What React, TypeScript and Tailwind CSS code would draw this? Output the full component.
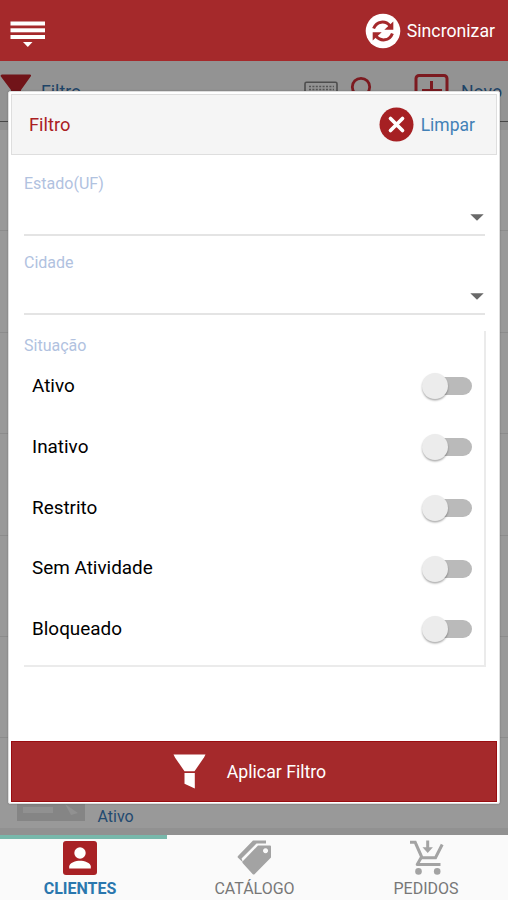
import React from "react";

const statuses = ["Ativo", "Inativo", "Restrito", "Sem Atividade", "Bloqueado"];

function MenuIcon() {
  return (
    <svg width="36" height="28" viewBox="0 0 36 28" fill="#fff">
      <rect x="0.5" y="1.5" width="34.5" height="4" />
      <rect x="0.5" y="8.3" width="34.5" height="4" />
      <rect x="0.5" y="15" width="34.5" height="4" />
      <path d="M13 22h9.5l-4.7 5z" />
    </svg>
  );
}

function SyncIcon() {
  return (
    <svg width="36" height="36" viewBox="0 0 36 36">
      <circle cx="18" cy="18" r="17.3" fill="#fff" />
      <g stroke="#a5292b" strokeWidth="3" fill="none">
        <path d="M8.6 15.6C11.5 7.8 20.5 7.2 25 13" />
        <path d="M27.4 20.4C24.5 28.2 15.5 28.8 11 23" />
      </g>
      <path d="M28.3 8.6v8.2h-9z" fill="#a5292b" />
      <path d="M7.7 27.4V19.2h9z" fill="#a5292b" />
    </svg>
  );
}

function Header() {
  return (
    <header className="flex h-[61px] shrink-0 items-center justify-between bg-[#a5292b] pl-[9.5px] pr-[13px]">
      <div className="pt-[7px]">
        <MenuIcon />
      </div>
      <div className="flex items-center gap-[6px] text-[17.7px] text-white">
        <SyncIcon />
        <span className="pt-[1px]">Sincronizar</span>
      </div>
    </header>
  );
}

function Toolbar() {
  return (
    <div className="flex h-[61px] shrink-0 items-start border-b border-[#474747] bg-[#939393] text-[17.7px] text-[#1e4467]">
      <svg width="32" height="34" viewBox="0 0 32 34" className="mt-[13px] shrink-0">
        <path d="M0.5 2Q0.5 0.5 2 0.5H30Q31.5 0.5 31 2L21 16V33L11 28V16Z" fill="#711419" />
      </svg>
      <span className="ml-[9px] mt-[18px]">Filtro</span>
      <svg width="34" height="24" viewBox="0 0 34 24" fill="none" className="ml-auto mt-[20px] shrink-0">
        <rect x="1" y="1.2" width="32" height="21" rx="1.5" stroke="#4d4d4d" strokeWidth="1.6" />
        <path d="M5 5.5H30M5 8.5H30" stroke="#555" strokeWidth="1.6" strokeDasharray="2 1.4" />
      </svg>
      <svg width="24" height="32" viewBox="0 0 24 32" fill="none" stroke="#7c1a20" strokeWidth="2.8" className="ml-[11px] mt-[15px] shrink-0">
        <circle cx="12" cy="11" r="8.7" />
        <path d="M12 20v10" />
      </svg>
      <svg width="36" height="36" viewBox="0 0 36 36" fill="none" stroke="#7c1a20" strokeWidth="3" className="ml-[41px] mt-[12px] shrink-0">
        <rect x="2" y="2.5" width="31" height="31" rx="3" />
        <path d="M17.5 8V28M8 17.5H28" />
      </svg>
      <span className="ml-[11px] mr-[6px] mt-[18px]">Novo</span>
    </div>
  );
}

function ClientList() {
  return (
    <div className="flex grow flex-col overflow-hidden bg-[#999999]">
      <div className="h-[8px] shrink-0 bg-[#919191]" />
      {[0, 1, 2, 3, 4, 5].map((row) => (
        <div key={row} className="h-[101.4px] shrink-0 border-b border-[#8c8c8c]" />
      ))}
      <div className="flex h-[90px] shrink-0 items-end pl-[17px]">
        <svg width="68" height="60" viewBox="0 0 68 60" className="mb-[7px]">
          <rect width="68" height="60" fill="#858585" />
          <path d="M6 46H36V52H6ZM48 43L61 52L54 54Z" fill="#919191" />
        </svg>
        <span className="-mb-[1px] ml-[12.5px] text-[16px] leading-6 text-[#234a70]">Ativo</span>
      </div>
      <div className="mt-auto h-[7px] shrink-0 bg-[#919191]" />
    </div>
  );
}

function SelectField({ label, className }: { label: string; className: string }) {
  return (
    <div className={`flex flex-col border-[#e4e4e4] ${className}`}>
      <span className="text-[16px] leading-5 text-[#b1c2df]">{label}</span>
      <svg width="14" height="7" viewBox="0 0 14 7" className="ml-auto mr-[1px] mt-[20px]">
        <path d="M0.3 0.3H13.7L7 6.8Z" fill="#696969" />
      </svg>
    </div>
  );
}

function Toggle() {
  return (
    <div className="flex h-[30px] w-[51px] items-center">
      <div className="size-[26px] shrink-0 rounded-full bg-[#ececec] shadow-[0_1.5px_2px_rgba(0,0,0,0.32)]" />
      <div className="-z-10 -ml-[13px] h-[18px] w-[37px] rounded-r-full bg-[#bababa]" />
    </div>
  );
}

function FilterDialog() {
  return (
    <section className="absolute left-[8px] top-[91px] isolate flex h-[713px] w-[492px] flex-col rounded-[2px] border border-[#dedede] bg-white px-[2px] pb-[1px] pt-[2px] shadow-[0_0_2px_rgba(0,0,0,0.25)]">
      <div className="flex h-[61px] shrink-0 items-center justify-between border border-[#dedede] bg-[#f5f5f5] pl-[17px] pr-[21px]">
        <h2 className="pt-[1px] text-[18.3px] text-[#aa2023]">Filtro</h2>
        <div className="flex items-center gap-[7px] text-[17.5px] text-[#4381b7]">
          <svg width="35" height="35" viewBox="0 0 35 35">
            <circle cx="17.5" cy="17.5" r="17" fill="#a62023" />
            <path d="M11.5 11.5L23.5 23.5M23.5 11.5L11.5 23.5" stroke="#fff" strokeWidth="3.7" strokeLinecap="round" />
          </svg>
          <span className="pt-[1px]">Limpar</span>
        </div>
      </div>
      <div className="flex grow flex-col pl-[13px] pr-[12px]">
        <SelectField label="Estado(UF)" className="mt-[19px] h-[62px] border-b-2" />
        <SelectField label="Cidade" className="mt-[17px] h-[62px] border-b-2" />
        <div className="-mr-px mt-[16px] flex h-[336px] flex-col border-b-2 border-r-2 border-[#ebebeb] pl-[8px] pr-[11px] pt-[5px]">
          <span className="-ml-[8px] text-[16px] leading-5 text-[#b1c2df]">Situação</span>
          {statuses.map((status) => (
            <div key={status} className="flex h-[60.75px] shrink-0 items-center justify-between text-[18.9px] text-black">
              <span>{status}</span>
              <Toggle />
            </div>
          ))}
        </div>
      </div>
      <button className="flex h-[61px] shrink-0 items-center justify-center border border-[#990d10] bg-[#a5292b] text-[17.7px] text-white">
        <svg width="33" height="35" viewBox="0 0 33 35" fill="#fff">
          <path d="M0.5 0.5H32.5L31 3.5L21.5 17.3H11.5L2 3.5Z" />
          <path d="M11.5 19H21.8V34.5L11.5 29.8Z" />
        </svg>
        <span className="ml-[21px] mr-[9px] pt-[2px]">Aplicar Filtro</span>
      </button>
    </section>
  );
}

function ClientIcon() {
  return (
    <svg width="34" height="34" viewBox="0 0 34 34">
      <rect width="34" height="34" rx="3" fill="#a82125" />
      <circle cx="17" cy="12" r="5.7" fill="#fff" />
      <path d="M6.2 27.5V25.5C6.2 21.8 13 19.8 17 19.8S27.8 21.8 27.8 25.5V27.5Z" fill="#fff" />
    </svg>
  );
}

function TagsIcon() {
  return (
    <svg width="36" height="36" viewBox="0 0 36 36" fill="#a3a3a3">
      <path d="M16 0.5H29V3.5H19.5L4.5 18.5L6 22.5L0.8 17.5Q0.3 16.8 1 16Z" />
      <path fillRule="evenodd" d="M21 5.5H33Q34 5.5 34 6.5V17.5L17.5 34.2Q16.7 35 15.8 34.2L5.8 23.2Q5 22.2 5.8 21.2ZM28.5 8.3a2.5 2.5 0 1 0 .1 0Z" />
    </svg>
  );
}

function CartIcon() {
  return (
    <svg width="36" height="36" viewBox="0 0 36 36" fill="none" stroke="#a3a3a3" strokeWidth="3">
      <path d="M1 2.3H6.2L13 17.7H26.5L33.2 4.5" />
      <path d="M12.5 17L8.2 24.5H31.5" strokeLinejoin="round" />
      <path d="M18.7 0.5V8" />
      <path d="M13.5 7.2H23.9L18.7 13Z" fill="#a3a3a3" stroke="none" />
      <circle cx="9.5" cy="31.4" r="3.3" fill="#a3a3a3" stroke="none" />
      <circle cx="28.2" cy="31.4" r="3.3" fill="#a3a3a3" stroke="none" />
    </svg>
  );
}

function BottomTabs() {
  return (
    <nav className="flex h-[65px] shrink-0 bg-[#fafafa] text-[16px] text-[#777]">
      <div className="flex w-[167px] flex-col items-center border-t-[4px] border-[#78b8ab] pr-[7px] pt-[2px] font-bold text-[#2a77ae]">
        <ClientIcon />
        <span className="mt-[4px] leading-5">CLIENTES</span>
      </div>
      <div className="flex w-[174px] flex-col items-center pl-px pt-[5px]">
        <TagsIcon />
        <span className="mt-[3px] leading-5">CATÁLOGO</span>
      </div>
      <div className="flex w-[167px] flex-col items-center pl-[4px] pt-[5px]">
        <CartIcon />
        <span className="mr-[1px] mt-[3px] leading-5">PEDIDOS</span>
      </div>
    </nav>
  );
}

export default function App() {
  return (
    <div className="relative flex h-[900px] w-[508px] flex-col overflow-hidden bg-[#999] font-['Roboto',sans-serif]">
      <Header />
      <Toolbar />
      <ClientList />
      <BottomTabs />
      <FilterDialog />
    </div>
  );
}
